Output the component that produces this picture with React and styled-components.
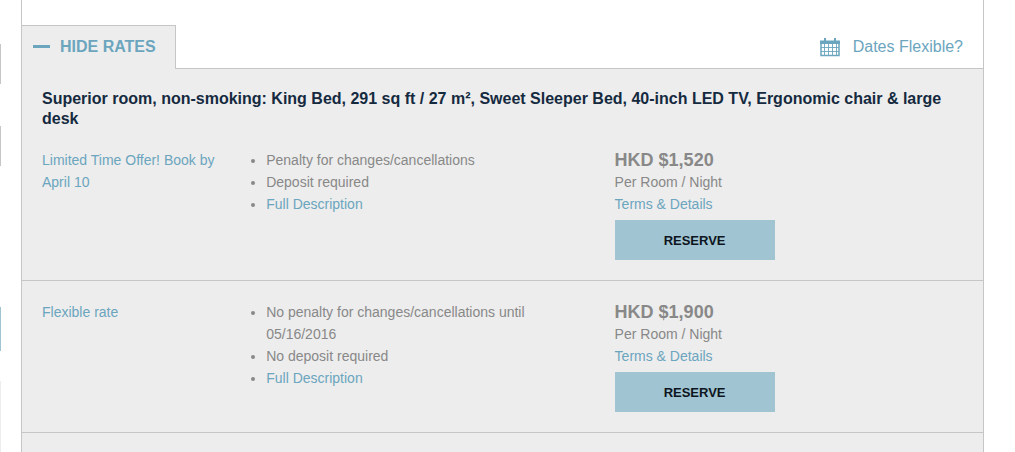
import React, { useState } from 'react';
import styled, { createGlobalStyle } from 'styled-components';

const GlobalStyle = createGlobalStyle`
  * {
    box-sizing: border-box;
  }

  body {
    margin: 0;
    background: #fff;
    color: #888;
    font-family: "Liberation Sans", Arial, Helvetica, sans-serif;
    font-size: 14px;
    line-height: 22px;
  }
`;

const Page = styled.div`
  display: flex;
  min-height: 100vh;
`;

const Rail = styled.div`
  width: 1px;
  margin-right: 20px;
  padding-top: 44px;
  display: flex;
  flex-direction: column;
  flex-shrink: 0;
`;

const RailMark = styled.div`
  background: ${props => props.color};
  height: ${props => props.size};
  margin-bottom: ${props => props.gap};
  flex: ${props => (props.fill ? 1 : 'none')};
`;

const Panel = styled.main`
  flex: 1;
  margin-right: 31px;
  padding-top: 25px;
  border: solid #c6c6c6;
  border-width: 0 1px;
  display: flex;
  flex-direction: column;
`;

const TopBar = styled.div`
  display: flex;
`;

const Tab = styled.button`
  display: flex;
  align-items: center;
  gap: 10px;
  height: 44px;
  padding: 0 19px 2px 11px;
  border: solid #c6c6c6;
  border-width: 1px 1px 0 0;
  background: #ededed;
  color: #6ba5be;
  font: bold 16px/20px "Liberation Sans", Arial, sans-serif;
  cursor: pointer;
`;

const Minus = styled.span`
  width: 17px;
  height: 3px;
  background: #6ba5be;
`;

const TopRight = styled.div`
  flex: 1;
  display: flex;
  align-items: center;
  justify-content: flex-end;
  padding-right: 20px;
  border-bottom: 1px solid #c6c6c6;
`;

const Link = styled.a`
  color: #6ba5be;
  text-decoration: none;

  &:hover {
    text-decoration: underline;
  }
`;

const FlexibleLink = styled(Link)`
  display: flex;
  align-items: center;
  gap: 13px;
  font-size: 16px;
`;

const Rates = styled.section`
  flex: 1;
  background: #ededed;
`;

const RoomTitle = styled.h2`
  margin: 0;
  padding: 20px 20px 0;
  color: #152a3f;
  font-size: 16px;
  line-height: 20px;
`;

const RateRow = styled.article`
  display: grid;
  grid-template-columns: 1fr 2fr 2fr;
  padding: 20px;
  border-bottom: 1px solid #c6c6c6;
`;

const Terms = styled.ul`
  margin: 0;
  padding-left: 40px;
`;

const PriceBox = styled.div`
  display: flex;
  flex-direction: column;
  align-items: flex-start;
  padding-left: 20px;
`;

const Price = styled.strong`
  font-size: 18px;
`;

const ReserveButton = styled.button`
  width: 160px;
  height: 40px;
  margin-top: 5px;
  padding: 2px 0 0;
  border: none;
  background: #a1c4d2;
  color: #0c1520;
  font: bold 13px/20px "Liberation Sans", Arial, sans-serif;
  cursor: pointer;

  &:hover {
    background: #8fb8c9;
  }
`;

const rates = [
  {
    name: 'Limited Time Offer! Book by April 10',
    terms: ['Penalty for changes/cancellations', 'Deposit required'],
    price: 'HKD $1,520'
  },
  {
    name: 'Flexible rate',
    terms: ['No penalty for changes/cancellations until 05/16/2016', 'No deposit required'],
    price: 'HKD $1,900'
  }
];

const CalendarIcon = () => (
  <svg width="20" height="20" viewBox="0 0 20 20" aria-hidden="true">
    <path d="M0 3.5H20V7H0Z" fill="#6ba5be" />
    <path d="M4 1H6V4H4ZM14 1H16V4H14Z" fill="#6ba5be" />
    <path d="M1 6V18.5H19V6" fill="none" stroke="#6ba5be" strokeWidth="1.5" />
    <path
      d="M4.5 7V18M8.5 7V18M12.5 7V18M16.5 7V18M1 10.5H19M1 14.5H19"
      fill="none"
      stroke="#6ba5be"
      strokeWidth="0.9"
    />
  </svg>
);

const Rate = ({ rate }) => (
  <RateRow>
    <div>
      <Link href="#rate">{rate.name}</Link>
    </div>
    <Terms>
      {rate.terms.map(term => (
        <li key={term}>{term}</li>
      ))}
      <li>
        <Link href="#description">Full Description</Link>
      </li>
    </Terms>
    <PriceBox>
      <Price>{rate.price}</Price>
      <span>Per Room / Night</span>
      <Link href="#terms">Terms &amp; Details</Link>
      <ReserveButton type="button">RESERVE</ReserveButton>
    </PriceBox>
  </RateRow>
);

const App = () => {
  const [open, setOpen] = useState(true);

  return (
    <>
      <GlobalStyle />
      <Page>
        <Rail>
          <RailMark color="#c6c6c6" size="40px" gap="42px" />
          <RailMark color="#c6c6c6" size="40px" gap="141px" />
          <RailMark color="#a1c4d2" size="44px" gap="30px" />
          <RailMark color="#ededed" fill />
        </Rail>
        <Panel>
          <TopBar>
            <Tab type="button" aria-expanded={open} onClick={() => setOpen(!open)}>
              <Minus />
              {open ? 'HIDE RATES' : 'SHOW RATES'}
            </Tab>
            <TopRight>
              <FlexibleLink href="#dates">
                <CalendarIcon />
                Dates Flexible?
              </FlexibleLink>
            </TopRight>
          </TopBar>
          {open && (
            <Rates>
              <RoomTitle>
                Superior room, non-smoking: King Bed, 291 sq ft / 27 m², Sweet Sleeper Bed, 40-inch
                LED TV, Ergonomic chair &amp; large desk
              </RoomTitle>
              {rates.map(rate => (
                <Rate key={rate.name} rate={rate} />
              ))}
            </Rates>
          )}
        </Panel>
      </Page>
    </>
  );
};

export default App;
